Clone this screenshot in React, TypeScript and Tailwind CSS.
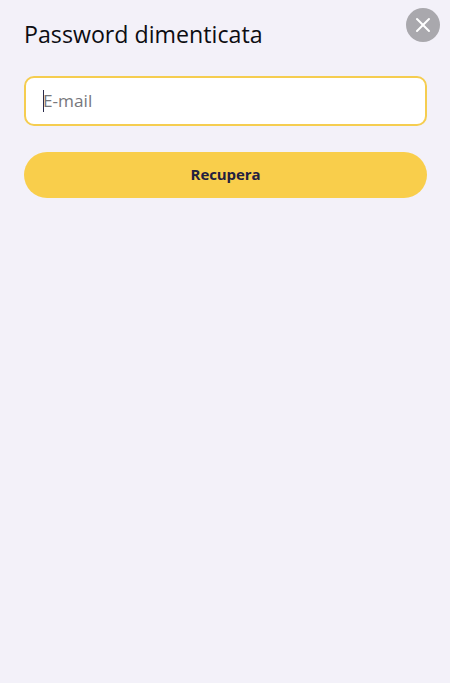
import { X } from "lucide-react";

const App = () => {
  return (
    <div className="relative min-h-[683px] bg-[#f3f1f9] px-6 pt-[17px] font-['Open_Sans',sans-serif]">
      <button className="absolute right-[10px] top-[8px] flex h-[34px] w-[34px] items-center justify-center rounded-full bg-[#a9a8ad] text-white">
        <X size={24} strokeWidth={2} />
      </button>

      <h1 className="text-[23.2px] leading-[34px] text-[#0d0d12]">
        Password dimenticata
      </h1>

      <div className="mt-[25px] flex h-[50px] w-[403px] items-center rounded-[10px] border-2 border-[#f5cd50] bg-white pl-[17px]">
        <span className="h-[22px] w-px bg-[#2a2a4a]" />
        <span className="-ml-px text-[17.2px] text-[#77777c]">E-mail</span>
      </div>

      <button className="mt-[26px] h-[46px] w-[403px] rounded-full bg-[#f9ce4b] pb-px text-[15px] font-bold tracking-[-0.1px] text-[#232040]">
        Recupera
      </button>
    </div>
  );
};

export default App;
